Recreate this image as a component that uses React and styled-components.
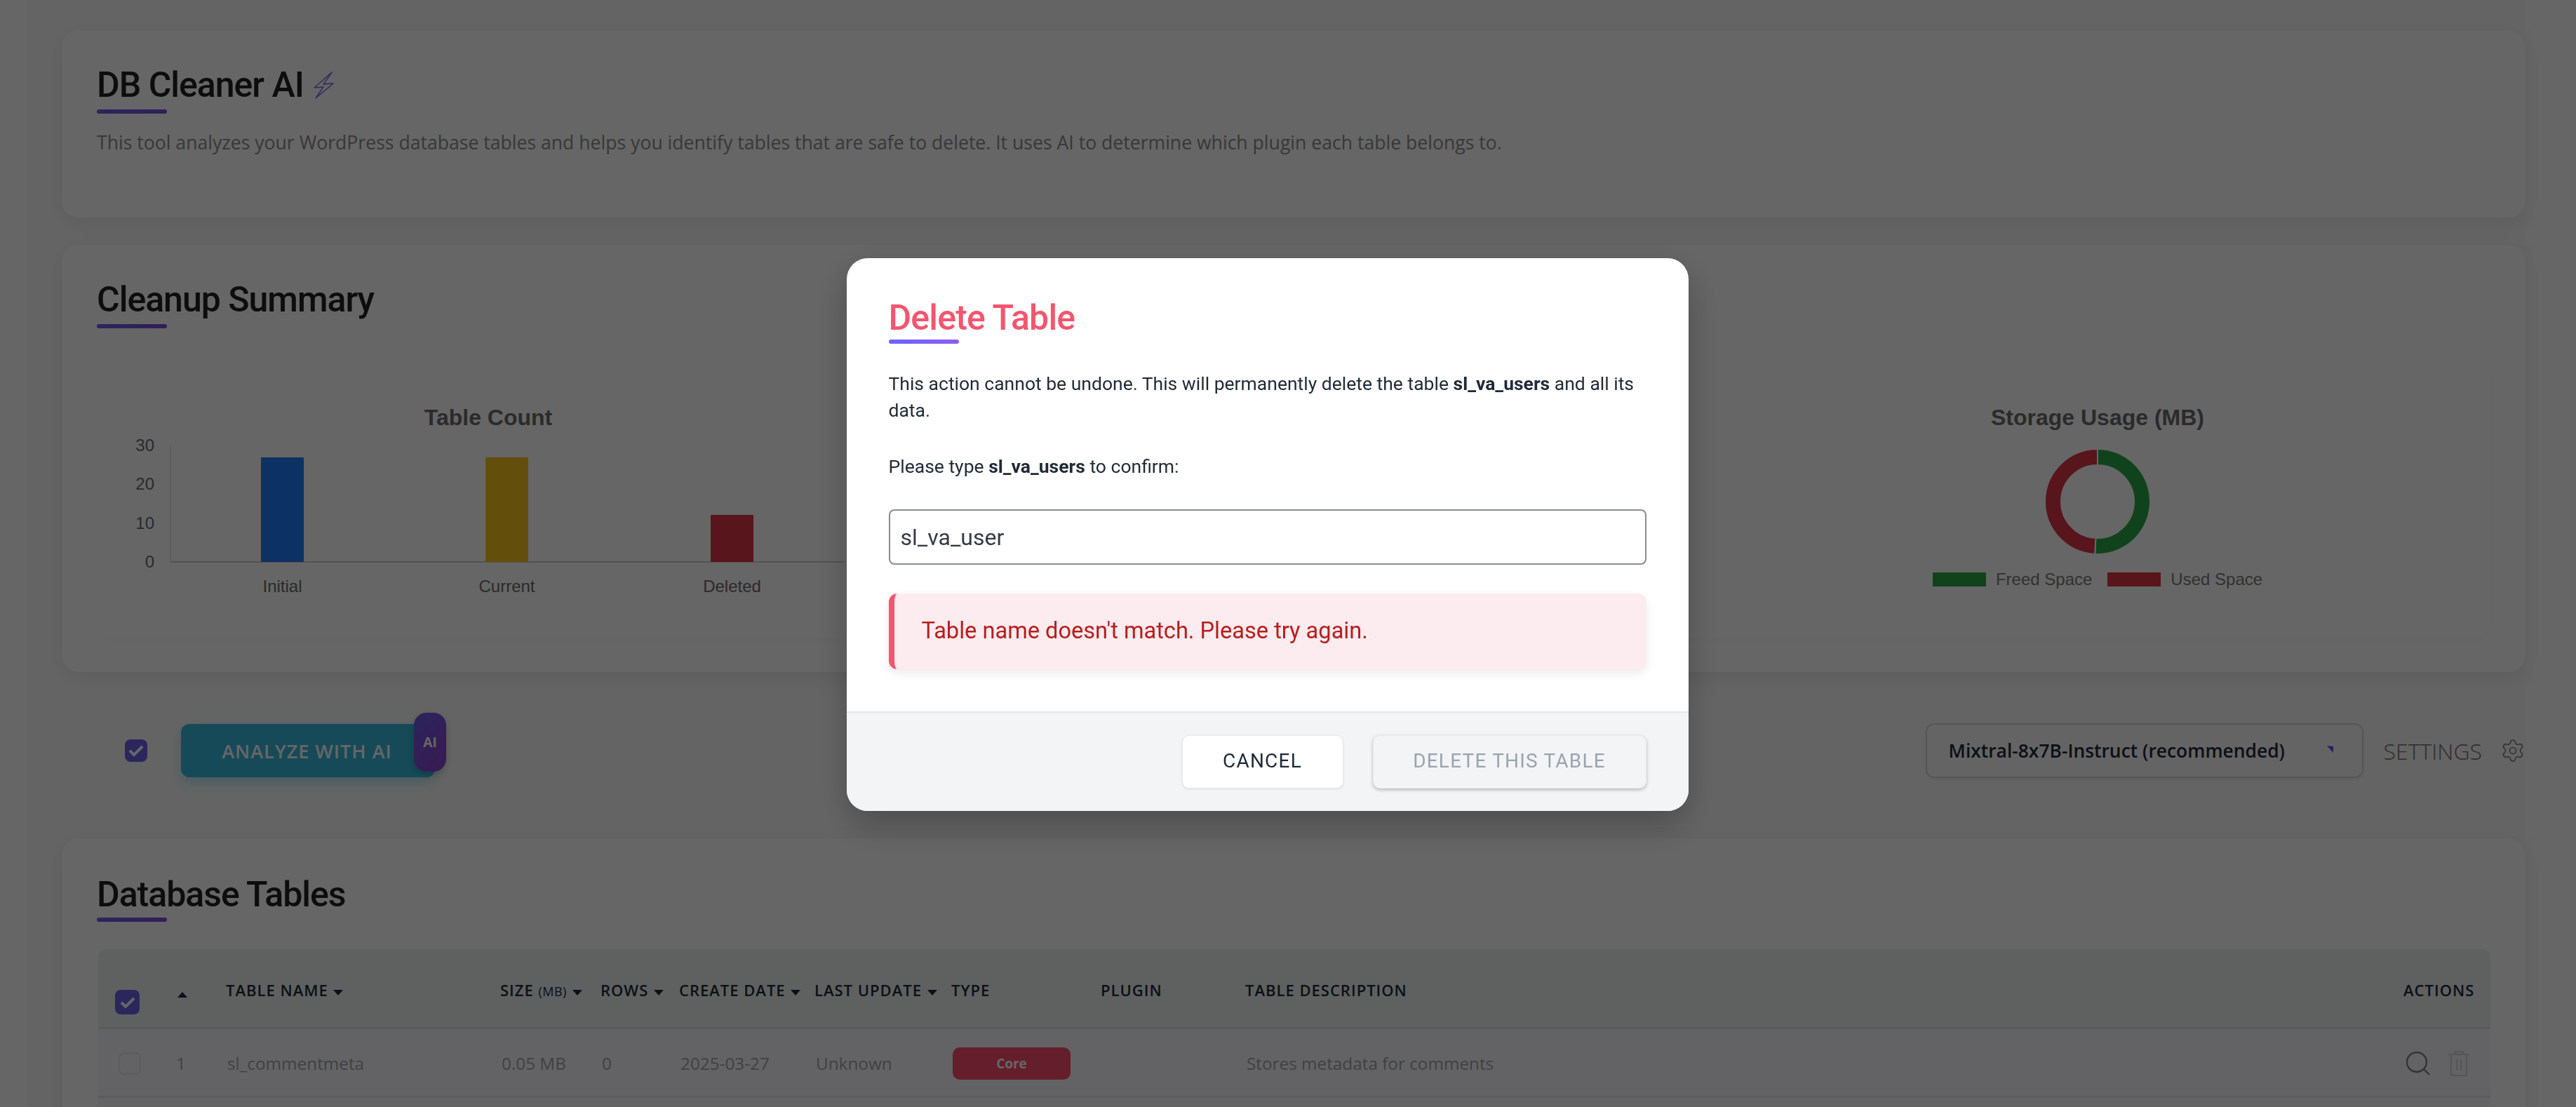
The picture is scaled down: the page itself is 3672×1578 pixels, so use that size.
import React from 'react';
import styled, { createGlobalStyle } from 'styled-components';
import { Settings } from 'lucide-react';

const GlobalStyle = createGlobalStyle`
  html, body {
    margin: 0;
    height: 100%;
    overflow: hidden;
    background: #ffffff;
    font-family: 'Open Sans', sans-serif;
  }
`;

const columns = '85px 73px 391px 143px 112px 193px 195px 213px 206px 1fr 100px';

const tableRows = [
  {
    id: 1,
    name: 'sl_commentmeta',
    size: '0.05 MB',
    rows: 0,
    created: '2025-03-27',
    updated: 'Unknown',
    type: 'Core',
    description: 'Stores metadata for comments',
  },
];

function polar(r, turn) {
  const a = turn * Math.PI * 2 - Math.PI / 2;
  return [75 + r * Math.cos(a), 75 + r * Math.sin(a)];
}

function arcPath(from, to, outer, inner) {
  const large = to - from > 0.5 ? 1 : 0;
  const [x1, y1] = polar(outer, from);
  const [x2, y2] = polar(outer, to);
  const [x3, y3] = polar(inner, to);
  const [x4, y4] = polar(inner, from);
  return `M${x1} ${y1}A${outer} ${outer} 0 ${large} 1 ${x2} ${y2}L${x3} ${y3}A${inner} ${inner} 0 ${large} 0 ${x4} ${y4}Z`;
}

function BarChart() {
  const bars = [
    { label: 'Initial', x: 231, y: 32, h: 149, color: '#207af7' },
    { label: 'Current', x: 551, y: 32, h: 149, color: '#f7c320' },
    { label: 'Deleted', x: 872, y: 114, h: 67, color: '#dc3545' },
  ];
  const ticks = [
    { label: '30', y: 15 },
    { label: '20', y: 70 },
    { label: '10', y: 126 },
    { label: '0', y: 181 },
  ];
  return (
    <svg width="1110" height="270" viewBox="0 0 1110 270">
      <line x1="102" y1="15" x2="102" y2="181" stroke="#dcdcdc" strokeWidth="1" />
      <line x1="102" y1="181" x2="1062" y2="181" stroke="#cfcfcf" strokeWidth="2" />
      {ticks.map((t) => (
        <ChartText key={t.label} x="79" y={t.y + 8} textAnchor="end">
          {t.label}
        </ChartText>
      ))}
      {bars.map((b) => (
        <g key={b.label}>
          <rect x={b.x} y={b.y} width="61" height={b.h} fill={b.color} />
          <ChartText x={b.x + 30.5} y="224" textAnchor="middle">
            {b.label}
          </ChartText>
        </g>
      ))}
    </svg>
  );
}

export default function App() {
  return (
    <>
      <GlobalStyle />
      <Page>
        <Card>
          <TitleRow>
            <Title>DB Cleaner AI</Title>
            <svg width="29" height="39" viewBox="0 0 29 39" fill="none" stroke="#7468e8" strokeWidth="1.4">
              <polygon points="26,1 14,18 28,17 3,38 14,22 1,23" strokeLinejoin="round" />
            </svg>
          </TitleRow>
          <TitleBar />
          <Intro>
            This tool analyzes your WordPress database tables and helps you identify tables that are
            safe to delete. It uses AI to determine which plugin each table belongs to.
          </Intro>
        </Card>

        <SummaryCard>
          <Title>Cleanup Summary</Title>
          <TitleBar />
          <ChartPanel>
            <ChartColumn>
              <ChartTitle>Table Count</ChartTitle>
              <BarChart />
            </ChartColumn>
            <ChartColumn />
            <ChartColumn>
              <ChartTitle>Storage Usage (MB)</ChartTitle>
              <DonutWrap>
                <svg width="150" height="150" viewBox="0 0 150 150">
                  <path d={arcPath(0, 0.508, 75, 52)} fill="#28a745" stroke="#ffffff" strokeWidth="2" />
                  <path d={arcPath(0.508, 1, 75, 52)} fill="#dc3545" stroke="#ffffff" strokeWidth="2" />
                </svg>
              </DonutWrap>
              <Legend>
                <LegendItem>
                  <LegendSwatch $color="#28a745" />
                  Freed Space
                </LegendItem>
                <LegendItem>
                  <LegendSwatch $color="#dc3545" />
                  Used Space
                </LegendItem>
              </Legend>
            </ChartColumn>
          </ChartPanel>
        </SummaryCard>

        <ActionBar>
          <ActionLeft>
            <CheckBox $size={32}>
              <CheckMark />
            </CheckBox>
            <AnalyzeButton>
              ANALYZE WITH AI
              <AiBadge>AI</AiBadge>
            </AnalyzeButton>
          </ActionLeft>
          <ActionRight>
            <ModelSelect>
              Mixtral-8x7B-Instruct (recommended)
              <SelectArrow width="9" height="10" viewBox="0 0 9 10">
                <polygon points="0,0 9,1 9,10" fill="#5a50ff" />
              </SelectArrow>
            </ModelSelect>
            <SettingsLabel>SETTINGS</SettingsLabel>
            <Settings size={36} strokeWidth={1.1} color="#7f7f7f" />
          </ActionRight>
        </ActionBar>

        <TablesCard>
          <Title>Database Tables</Title>
          <TitleBar $gap={4} />
          <TableBox>
            <HeaderRow>
              <HeaderCheck>
                <CheckBox $size={35}>
                  <CheckMark />
                </CheckBox>
              </HeaderCheck>
              <HeaderCell>
                <Caret $up />
              </HeaderCell>
              <HeaderCell>
                TABLE NAME <Caret />
              </HeaderCell>
              <HeaderCell>
                SIZE <Small>(MB)</Small> <Caret />
              </HeaderCell>
              <HeaderCell>
                ROWS <Caret />
              </HeaderCell>
              <HeaderCell>
                CREATE DATE <Caret />
              </HeaderCell>
              <HeaderCell>
                LAST UPDATE <Caret />
              </HeaderCell>
              <HeaderCell>TYPE</HeaderCell>
              <HeaderCell>PLUGIN</HeaderCell>
              <HeaderCell>TABLE DESCRIPTION</HeaderCell>
              <HeaderCell>ACTIONS</HeaderCell>
            </HeaderRow>
            {tableRows.map((row) => (
              <DataRow key={row.id}>
                <RowCheck />
                <Cell>{row.id}</Cell>
                <Cell>{row.name}</Cell>
                <Cell>{row.size}</Cell>
                <Cell>{row.rows}</Cell>
                <Cell>{row.created}</Cell>
                <Cell>{row.updated}</Cell>
                <Cell>
                  <TypeBadge>{row.type}</TypeBadge>
                </Cell>
                <Cell />
                <Cell>{row.description}</Cell>
                <RowActions>
                  <svg width="34" height="34" viewBox="0 0 34 34" fill="none" stroke="#7f7f7f" strokeWidth="2.4">
                    <circle cx="15" cy="15" r="14" />
                    <line x1="25" y1="25" x2="33" y2="33" />
                  </svg>
                  <svg width="30" height="36" viewBox="0 0 30 36" fill="none" stroke="#d6d6d8" strokeWidth="2.4">
                    <path d="M0 5h30M9 5V1h12v4M4 5v30h22V5M12 12v16M18 12v16" />
                  </svg>
                </RowActions>
              </DataRow>
            ))}
          </TableBox>
        </TablesCard>
      </Page>

      <Overlay>
        <Modal>
          <ModalBody>
            <ModalTitle>Delete Table</ModalTitle>
            <TitleBar $gap={2} $bright />
            <ModalText>
              This action cannot be undone. This will permanently delete the table{' '}
              <strong>sl_va_users</strong> and all its data.
            </ModalText>
            <ModalText>
              Please type <strong>sl_va_users</strong> to confirm:
            </ModalText>
            <ConfirmInput type="text" value="sl_va_user" readOnly />
            <ErrorBox>Table name doesn't match. Please try again.</ErrorBox>
          </ModalBody>
          <ModalFooter>
            <CancelButton>CANCEL</CancelButton>
            <DeleteButton disabled>DELETE THIS TABLE</DeleteButton>
          </ModalFooter>
        </Modal>
      </Overlay>
    </>
  );
}

const Page = styled.div`
  margin-left: 38px;
  width: 3562px;
  box-sizing: border-box;
  padding: 43px 0 0 50px;
  background: #fbfbfb;
  box-shadow: 0 0 24px rgba(0, 0, 0, 0.02);
`;

const Card = styled.section`
  background: #ffffff;
  border-radius: 24px;
  padding: 49px 50px 87px;
  box-shadow: 0 8px 30px rgba(0, 0, 0, 0.08);
`;

const SummaryCard = styled(Card)`
  margin-top: 39px;
  padding-bottom: 48px;
`;

const TablesCard = styled(Card)`
  padding-top: 51px;
`;

const TitleRow = styled.div`
  display: flex;
  align-items: center;
  gap: 14px;
`;

const Title = styled.h2`
  margin: 0;
  font-family: 'Roboto', sans-serif;
  font-size: 50px;
  font-weight: 500;
  letter-spacing: -1px;
  line-height: 58px;
  color: #212121;
`;

const TitleBar = styled.div`
  width: 100px;
  height: 6px;
  margin-top: ${(p) => p.$gap ?? 6}px;
  border-radius: 3px;
  background: linear-gradient(90deg, ${(p) => (p.$bright ? '#6c63ff, #8b5cf6' : '#6c5ce7, #7c4dd8')});
`;

const Intro = styled.p`
  margin: 21px 0 0;
  font-size: 26.6px;
  font-weight: 400;
  line-height: 40px;
  color: #8c8c8c;
`;

const ChartPanel = styled.div`
  display: grid;
  grid-template-columns: repeat(3, 1110px);
  column-gap: 37px;
  height: 403px;
  margin-top: 39px;
  padding-left: 3px;
  border-radius: 24px;
  background: #ffffff;
  box-shadow: 0 4px 24px rgba(0, 0, 0, 0.02);
`;

const ChartColumn = styled.div`
  display: flex;
  flex-direction: column;
  align-items: center;
  padding-top: 70px;
`;

const ChartTitle = styled.div`
  margin-bottom: 7px;
  font-family: 'Liberation Sans', sans-serif;
  font-size: 32px;
  font-weight: 700;
  line-height: 36px;
  color: #6c6c6c;
`;

const ChartText = styled.text`
  font-family: 'Liberation Sans', sans-serif;
  font-size: 24px;
  fill: #6a6a6a;
`;

const DonutWrap = styled.div`
  display: flex;
  margin-top: 20px;
`;

const Legend = styled.div`
  display: flex;
  gap: 22px;
  margin-top: 22px;
`;

const LegendItem = styled.div`
  display: flex;
  align-items: center;
  gap: 14px;
  font-family: 'Liberation Sans', sans-serif;
  font-size: 24px;
  line-height: 28px;
  color: #7a7a7a;
`;

const LegendSwatch = styled.span`
  width: 76px;
  height: 20px;
  background: ${(p) => p.$color};
`;

const ActionBar = styled.div`
  display: flex;
  justify-content: space-between;
  align-items: center;
  height: 78px;
  padding: 73px 0 86px 90px;
`;

const ActionLeft = styled.div`
  display: flex;
  align-items: center;
  gap: 48px;
`;

const ActionRight = styled.div`
  display: flex;
  align-items: center;
`;

const CheckBox = styled.span`
  display: flex;
  align-items: center;
  justify-content: center;
  width: ${(p) => p.$size}px;
  height: ${(p) => p.$size}px;
  border-radius: 8px;
  background: #6c63e8;
`;

const CheckMark = () => (
  <svg width="22" height="18" viewBox="0 0 22 18" fill="none" stroke="#ffffff" strokeWidth="4">
    <path d="M2 9l6 6L20 3" />
  </svg>
);

const AnalyzeButton = styled.button`
  position: relative;
  width: 362px;
  height: 76px;
  padding: 0 3px 0 0;
  border: 0;
  border-radius: 12px;
  background: #37b9dc;
  box-shadow: 0 8px 18px rgba(55, 185, 220, 0.35);
  font-family: 'Open Sans', sans-serif;
  font-size: 27px;
  font-weight: 600;
  letter-spacing: 1px;
  color: #ffffff;
`;

const AiBadge = styled.span`
  position: absolute;
  top: -16px;
  right: -16px;
  display: flex;
  align-items: center;
  justify-content: center;
  width: 46px;
  height: 84px;
  border-radius: 18px;
  background: linear-gradient(135deg, #6c5ce7, #8e44c8);
  box-shadow: 0 4px 12px rgba(0, 0, 0, 0.2);
  font-size: 19px;
  font-weight: 700;
  letter-spacing: 0;
  color: #ffffff;
`;

const ModelSelect = styled.div`
  display: flex;
  align-items: center;
  justify-content: space-between;
  box-sizing: border-box;
  width: 624px;
  height: 78px;
  padding: 0 41px 0 31px;
  border: 2px solid #d8d8dc;
  border-radius: 12px;
  box-shadow: 0 2px 4px rgba(0, 0, 0, 0.08);
  font-size: 26.4px;
  font-weight: 600;
  color: #1f2937;
`;

const SelectArrow = styled.svg`
  display: block;
  margin-top: -4px;
`;

const SettingsLabel = styled.span`
  margin: 0 26px 0 29px;
  font-size: 32px;
  font-weight: 300;
  color: #707070;
`;

const TableBox = styled.div`
  margin-top: 39px;
  margin-left: 2px;
  margin-right: 0;
  padding-bottom: 60px;
  border-radius: 12px;
  background: #f8f8fc;
`;

const HeaderRow = styled.div`
  display: grid;
  grid-template-columns: ${columns};
  align-items: center;
  box-sizing: border-box;
  height: 114px;
  padding: 4px 24px 0;
  border-bottom: 3px solid #e4e4e4;
  border-radius: 12px 12px 0 0;
  background: #ebf2f0;
`;

const HeaderCell = styled.div`
  font-size: 22px;
  font-weight: 600;
  letter-spacing: 1px;
  white-space: nowrap;
  color: #1f2937;
`;

const HeaderCheck = styled.div`
  margin-top: 36px;
`;

const Small = styled.span`
  font-size: 18px;
  font-weight: 400;
  letter-spacing: 0.5px;
`;

const Caret = styled.span`
  display: inline-block;
  margin-left: ${(p) => (p.$up ? '4px' : '1px')};
  vertical-align: ${(p) => (p.$up ? '-2px' : '1px')};
  border-left: 7px solid transparent;
  border-right: 7px solid transparent;
  border-top: ${(p) => (p.$up ? '0' : '8px solid #1f2937')};
  border-bottom: ${(p) => (p.$up ? '8px solid #1f2937' : '0')};
`;

const DataRow = styled.div`
  display: grid;
  grid-template-columns: ${columns};
  align-items: center;
  box-sizing: border-box;
  height: 98px;
  padding: 2px 24px 0;
  border-bottom: 3px solid #e4e4e4;
`;

const RowCheck = styled.span`
  display: block;
  box-sizing: border-box;
  width: 32px;
  height: 32px;
  margin-left: 5px;
  border: 2px solid #e6e6ea;
  border-radius: 8px;
`;

const Cell = styled.div`
  padding-left: 2px;
  font-size: 24.3px;
  white-space: nowrap;
  color: #a2a2a2;
`;

const TypeBadge = styled.span`
  display: flex;
  align-items: center;
  justify-content: center;
  width: 168px;
  height: 46px;
  border-radius: 10px;
  background: #fc4b6e;
  font-size: 19px;
  font-weight: 700;
  color: #ffffff;
`;

const RowActions = styled.div`
  display: flex;
  align-items: center;
  justify-content: flex-end;
  gap: 26px;
  margin-right: 6px;
`;

const Overlay = styled.div`
  position: fixed;
  inset: 0;
  display: flex;
  justify-content: center;
  align-items: flex-start;
  box-sizing: border-box;
  padding: 368px 59px 0 0;
  background: rgba(0, 0, 0, 0.6);
`;

const Modal = styled.div`
  width: 1200px;
  overflow: hidden;
  border-radius: 30px;
  background: #ffffff;
  box-shadow: 0 20px 50px rgba(0, 0, 0, 0.25);
  font-family: 'Roboto', sans-serif;
`;

const ModalBody = styled.div`
  padding: 56px 60px 60px;
`;

const ModalTitle = styled.h2`
  margin: 0;
  font-size: 50px;
  font-weight: 500;
  letter-spacing: -0.8px;
  line-height: 58px;
  color: #f3556f;
`;

const ModalText = styled.p`
  margin: 38px 0 42px;
  font-size: 26.5px;
  line-height: 38px;
  color: #1f2937;

  & + & {
    margin-top: 0;
  }

  strong {
    font-weight: 700;
  }
`;

const ConfirmInput = styled.input`
  display: block;
  box-sizing: border-box;
  width: 100%;
  height: 79px;
  padding: 0 15px;
  border: 2px solid #8a8a94;
  border-radius: 8px;
  outline: 0;
  font-family: 'Roboto', sans-serif;
  font-size: 32px;
  color: #333a45;
`;

const ErrorBox = styled.div`
  display: flex;
  align-items: center;
  box-sizing: border-box;
  height: 108px;
  margin-top: 41px;
  padding: 0 0 3px 39px;
  border-left: 8px solid #f3556f;
  border-radius: 12px;
  background: #fdecef;
  box-shadow: 0 6px 14px rgba(0, 0, 0, 0.08);
  font-size: 32.6px;
  color: #b91c1c;
`;

const ModalFooter = styled.div`
  display: flex;
  justify-content: flex-end;
  gap: 42px;
  padding: 32px 60px;
  border-top: 2px solid #e5e7eb;
  background: #f3f4f6;
`;

const CancelButton = styled.button`
  width: 230px;
  height: 76px;
  padding: 0 0 3px;
  border: 1px solid #e9eaed;
  border-radius: 10px;
  background: #ffffff;
  box-shadow: 0 1px 3px rgba(0, 0, 0, 0.1);
  font-family: 'Roboto', sans-serif;
  font-size: 28px;
  font-weight: 400;
  letter-spacing: 1.2px;
  color: #1f2937;
`;

const DeleteButton = styled(CancelButton)`
  width: 390px;
  background: #f3f4f6;
  box-shadow: 0 2px 5px rgba(0, 0, 0, 0.25);
  color: #9ca3af;
`;
